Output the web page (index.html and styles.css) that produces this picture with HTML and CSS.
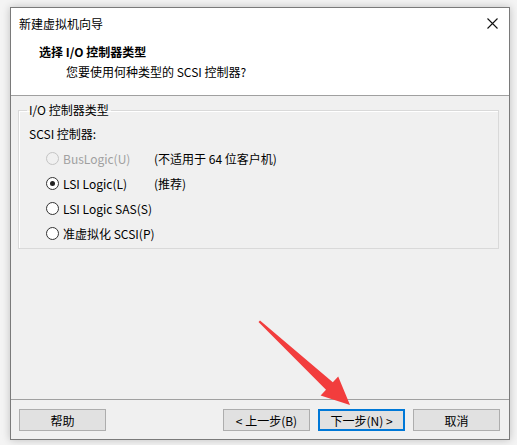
FILE: index.html
```html
<!DOCTYPE html>
<html lang="zh-CN">
<head>
    <meta charset="UTF-8">
    <title>新建虚拟机向导</title>
    <link rel="stylesheet" href="styles.css">
</head>
<body>

    <div class="dialog">
        <div class="top">
            <div class="titlebar">
                <span>新建虚拟机向导</span>
                <svg class="close" width="11" height="11" viewBox="0 0 11 11">
                    <path d="M0.5 0.5 L10.5 10.5 M10.5 0.5 L0.5 10.5" stroke="#111" stroke-width="1.1" fill="none"/>
                </svg>
            </div>
            <div class="heading">
                <h1>选择 I/O 控制器类型</h1>
                <p>您要使用何种类型的 SCSI 控制器?</p>
            </div>
        </div>

        <div class="content">
            <fieldset class="group">
                <legend>I/O 控制器类型</legend>
                <div class="row">SCSI 控制器:</div>
                <div class="row option disabled">
                    <span class="radio"></span>
                    <span class="label">BusLogic(U)</span>
                    <span class="note">(不适用于 64 位客户机)</span>
                </div>
                <div class="row option">
                    <span class="radio checked"></span>
                    <span class="label">LSI Logic(L)</span>
                    <span class="note">(推荐)</span>
                </div>
                <div class="row option">
                    <span class="radio"></span>
                    <span class="label">LSI Logic SAS(S)</span>
                </div>
                <div class="row option">
                    <span class="radio"></span>
                    <span class="label">准虚拟化 SCSI(P)</span>
                </div>
            </fieldset>
        </div>

        <div class="footer">
            <button class="btn">帮助</button>
            <div class="spacer"></div>
            <button class="btn">&lt; 上一步(B)</button>
            <button class="btn default">下一步(N) &gt;</button>
            <button class="btn">取消</button>
        </div>
    </div>

    <!-- 红色提示箭头 -->
    <svg class="pointer" width="517" height="445" viewBox="0 0 517 445">
        <polygon points="258.5,322 260,320.5 332.8,382.3 338.2,376.4 350,405 320.6,395.6 326,389.7" fill="#f23d3d"/>
    </svg>

</body>
</html>
```

FILE: styles.css
```css
body {
    margin: 0;
    padding: 7px 0 0 10px;
    background-color: #f4f4f4;
    font-family: "Noto Sans CJK SC", "Noto Sans", sans-serif;
    font-size: 12px;
    color: #000;
    height: 445px;
    box-sizing: border-box;
    overflow: hidden;
}

.dialog {
    width: 498px;
    height: 431px;
    border: 1px solid #7a7a7a;
    background-color: #f0f0f0;
    box-shadow: 0 0 8px rgba(0, 0, 0, 0.22);
    display: flex;
    flex-direction: column;
}

.top {
    height: 87px;
    flex-shrink: 0;
    overflow: hidden;
    background-color: #fff;
    border-bottom: 1px solid #a0a0a0;
}

.titlebar {
    height: 30px;
    padding-left: 8px;
    display: flex;
    align-items: center;
    justify-content: space-between;
}

.close {
    margin-right: 11px;
}

.heading {
    padding: 4px 0 0 28px;
}

.heading h1 {
    margin: 0;
    height: 20px;
    font-size: 12px;
    line-height: 20px;
    font-weight: bold;
}

.heading p {
    margin: 0;
    height: 20px;
    padding-left: 27px;
    line-height: 20px;
}

.content {
    flex: 1;
    padding: 6px 10px 0 7px;
}

.group {
    margin: 0;
    padding: 3px 0 0 10px;
    border: 1px solid #d9d9d9;
    box-shadow: inset 1px 1px 0 #fff;
    height: 147px;
    box-sizing: border-box;
}

.group legend {
    padding: 0 2px;
    margin-left: -2px;
    height: 16px;
    line-height: 16px;
}

.row {
    height: 25px;
    line-height: 25px;
    display: flex;
    align-items: center;
    white-space: nowrap;
}

.option {
    padding-left: 17px;
}

.radio {
    width: 11px;
    height: 11px;
    flex-shrink: 0;
    border: 1px solid #333;
    border-radius: 50%;
    background-color: #fff;
    margin-right: 4px;
    position: relative;
}

.radio.checked::after {
    content: "";
    position: absolute;
    left: 3px;
    top: 3px;
    width: 5px;
    height: 5px;
    border-radius: 50%;
    background-color: #222;
}

.label {
    min-width: 91px;
}

.disabled .radio {
    border-color: #c4c4c4;
    background-color: #f0f0f0;
}

.disabled .label {
    color: #a0a0a0;
}

.footer {
    border-top: 1px solid #a0a0a0;
    height: 40px;
    flex-shrink: 0;
    padding: 9px 9px 0 8px;
    box-sizing: border-box;
    display: flex;
    align-items: flex-start;
    gap: 8px;
}

.spacer {
    flex: 1;
}

.btn {
    width: 87px;
    height: 22px;
    padding: 0;
    background-color: #e1e1e1;
    border: 1px solid #adadad;
    font-family: inherit;
    font-size: 12px;
    color: #000;
}

.btn.default {
    border: 2px solid #0078d7;
}

.pointer {
    position: absolute;
    left: 0;
    top: 0;
    pointer-events: none;
}
```
